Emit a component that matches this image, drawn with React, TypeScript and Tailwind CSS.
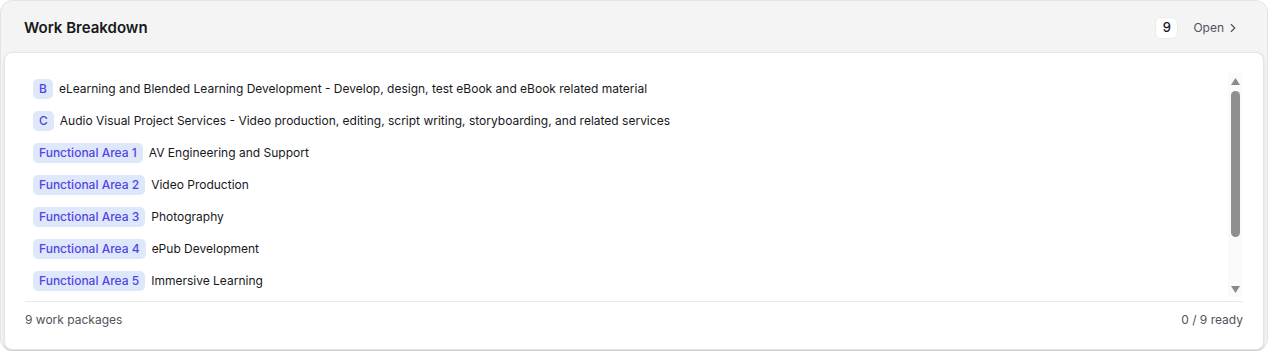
import React from 'react';
import { ChevronRight } from 'lucide-react';

type Item = { code: string; title: string };

const items: Item[] = [
  { code: 'B', title: 'eLearning and Blended Learning Development - Develop, design, test eBook and eBook related material' },
  { code: 'C', title: 'Audio Visual Project Services - Video production, editing, script writing, storyboarding, and related services' },
  { code: 'Functional Area 1', title: 'AV Engineering and Support' },
  { code: 'Functional Area 2', title: 'Video Production' },
  { code: 'Functional Area 3', title: 'Photography' },
  { code: 'Functional Area 4', title: 'ePub Development' },
  { code: 'Functional Area 5', title: 'Immersive Learning' },
  { code: 'Functional Area 6', title: 'Instructional Design' },
  { code: 'Functional Area 7', title: 'Graphic Design' },
];

const Arrow: React.FC<{ down?: boolean }> = ({ down }) => (
  <svg width="9" height="7" viewBox="0 0 9 7" className="shrink-0">
    <polygon points={down ? '0,0 9,0 4.5,7' : '4.5,0 9,7 0,7'} fill="#8a8a8a" />
  </svg>
);

const App: React.FC = () => {
  return (
    <div className="w-[1268px] h-[351px] font-['Inter',sans-serif] text-[#18181b]">
      <div className="h-full flex flex-col rounded-xl border border-[#e4e4e7] bg-[#f4f4f4] px-[3px] pb-[2px]">
        <div className="h-[51px] shrink-0 flex items-center justify-between pl-[20px] pr-[24px]">
          <h2 className="text-[15px] font-semibold pt-[3px]">Work Breakdown</h2>
          <div className="flex items-center gap-[15px] pt-[3px]">
            <span className="w-[23px] h-[22px] flex items-center justify-center rounded-md bg-white border border-[#ececec] text-[13px] font-medium">
              9
            </span>
            <button className="flex items-center gap-0.5 text-[12px] text-[#52525b]">
              Open
              <ChevronRight className="w-3.5 h-3.5" strokeWidth={2} />
            </button>
          </div>
        </div>

        <div className="flex-1 flex flex-col rounded-lg border border-[#e4e4e7] bg-white shadow-sm px-[20px] pt-[20px] pb-[20px]">
          <div className="h-[224px] shrink-0 flex">
            <ul className="flex-1 overflow-hidden pl-2 pb-3">
              {items.map((it) => (
                <li key={it.code} className="h-8 flex items-center gap-1.5 text-[12px] whitespace-nowrap">
                  <span className="h-5 px-1.5 flex items-center rounded-[5px] bg-[#dfe8fb] text-[#4f46e5] font-medium">
                    {it.code}
                  </span>
                  <span>{it.title}</span>
                </li>
              ))}
            </ul>
            <div className="w-[14px] mr-[1px] flex flex-col items-center bg-[#fafafa] pt-[5px] pb-[4px]">
              <Arrow />
              <div className="mt-[6px] h-[146px] w-[9px] rounded-full bg-[#8f8f8f]" />
              <div className="flex-1" />
              <Arrow down />
            </div>
          </div>
          <div className="border-t border-[#e9e9eb] mt-[4px] pt-[9px] flex items-center justify-between text-[12px] text-[#52525b]">
            <span>9 work packages</span>
            <span>0 / 9 ready</span>
          </div>
        </div>
      </div>
    </div>
  );
};

export default App;
